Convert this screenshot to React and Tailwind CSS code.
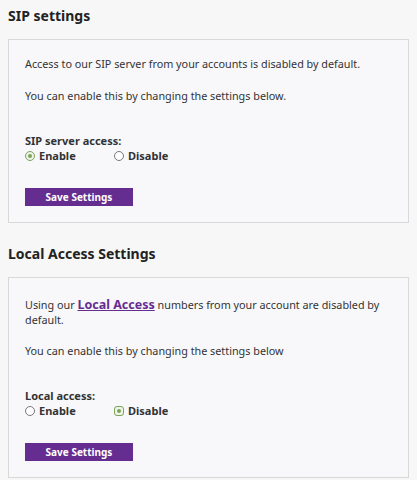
import React, { useState } from 'react';

const font = { fontFamily: '"Noto Sans", "Open Sans", sans-serif' };

const Radio = ({ checked, focused, label, onClick }) => (
  <label onClick={onClick} className="flex items-center w-[89px] cursor-pointer">
    {checked ? (
      <span
        className={`w-[10px] h-[10px] border border-[#7ba35b] bg-[#eef4e8] flex items-center justify-center ${
          focused ? 'rounded-[3px]' : 'rounded-full'
        }`}
      >
        <span className="w-[4px] h-[4px] rounded-full bg-[#7ba35b]"></span>
      </span>
    ) : (
      <span className="w-[10px] h-[10px] rounded-full border border-[#77777f] bg-white"></span>
    )}
    <span className="ml-[4px] font-bold text-[11px] text-[#333]">{label}</span>
  </label>
);

const SettingsBox = ({ title, label, initial, children }) => {
  const [value, setValue] = useState(initial);
  return (
    <section>
      <h2 className="text-[14px] leading-[32px] font-bold text-[#222] px-[8px] mb-[7px]">{title}</h2>
      <div className="mx-[8px] border border-[#d8d8d8] bg-[#f8f8fb] p-[16px] text-[10.8px] leading-[15px] text-[#333]">
        {children}
        <div className="mt-[30px] font-bold text-[11px] leading-[15px]">{label}</div>
        <div className="flex h-[15px] items-center">
          <Radio checked={value === 'enable'} label="Enable" onClick={() => setValue('enable')} />
          <Radio
            checked={value === 'disable'}
            focused={initial === 'disable'}
            label="Disable"
            onClick={() => setValue('disable')}
          />
        </div>
        <button className="mt-[25px] w-[108px] h-[18px] bg-[#662d91] text-white text-[10px] font-bold leading-[18px] block">
          Save Settings
        </button>
      </div>
    </section>
  );
};

export default function App() {
  return (
    <div className="min-h-screen bg-[#f7f7f7]" style={font}>
      <SettingsBox title="SIP settings" label="SIP server access:" initial="enable">
        <p>Access to our SIP server from your accounts is disabled by default.</p>
        <p className="mt-[17px]">You can enable this by changing the settings below.</p>
      </SettingsBox>
      <div className="h-[15px]"></div>
      <SettingsBox title="Local Access Settings" label="Local access:" initial="disable">
        <p className="mt-[3px]">
          Using our{' '}
          <a href="#" className="text-[#662d91] font-bold text-[12.5px] underline leading-[15px]">
            Local Access
          </a>{' '}
          numbers from your account are disabled by default.
        </p>
        <p className="mt-[16px]">You can enable this by changing the settings below</p>
      </SettingsBox>
    </div>
  );
}
